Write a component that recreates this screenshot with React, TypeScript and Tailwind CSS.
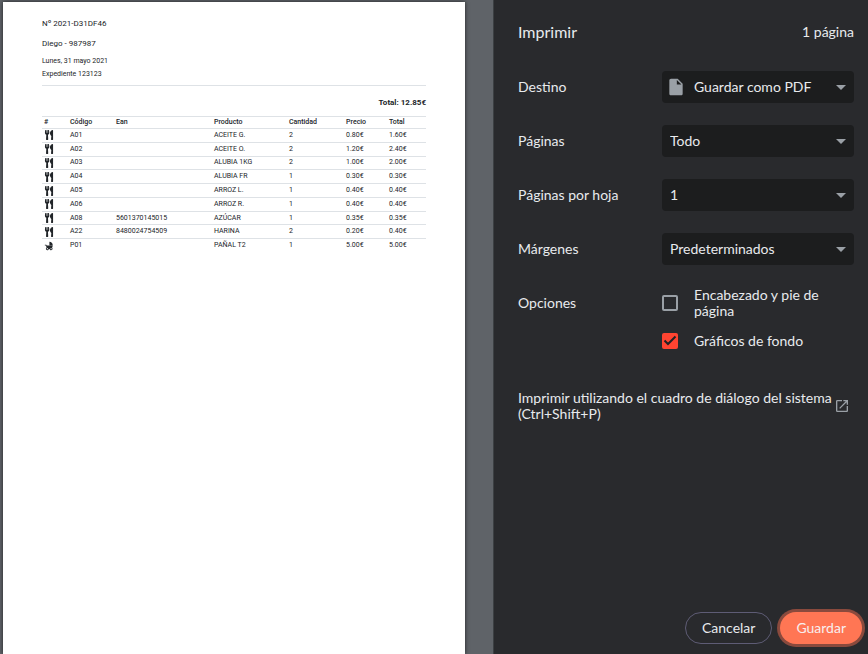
import type { ReactNode } from 'react';
import { FaUtensils } from 'react-icons/fa';
import { MdChildFriendly, MdInsertDriveFile, MdOutlineArrowDropDown, MdOutlineOpenInNew } from 'react-icons/md';

type Line = {
  code: string;
  ean?: string;
  product: string;
  quantity: number;
  price: string;
  total: string;
  baby?: boolean;
};

const lines: Line[] = [
  { code: 'A01', product: 'ACEITE G.', quantity: 2, price: '0.80€', total: '1.60€' },
  { code: 'A02', product: 'ACEITE O.', quantity: 2, price: '1.20€', total: '2.40€' },
  { code: 'A03', product: 'ALUBIA 1KG', quantity: 2, price: '1.00€', total: '2.00€' },
  { code: 'A04', product: 'ALUBIA FR', quantity: 1, price: '0.30€', total: '0.30€' },
  { code: 'A05', product: 'ARROZ L.', quantity: 1, price: '0.40€', total: '0.40€' },
  { code: 'A06', product: 'ARROZ R.', quantity: 1, price: '0.40€', total: '0.40€' },
  { code: 'A08', ean: '5601370145015', product: 'AZÚCAR', quantity: 1, price: '0.35€', total: '0.35€' },
  { code: 'A22', ean: '8480024754509', product: 'HARINA', quantity: 2, price: '0.20€', total: '0.40€' },
  { code: 'P01', product: 'PAÑAL T2', quantity: 1, price: '5.00€', total: '5.00€', baby: true },
];

const headings = ['#', 'Código', 'Ean', 'Producto', 'Cantidad', 'Precio', 'Total'];

function Receipt() {
  return (
    <article className="flex-1 bg-white px-[39px] pt-4 font-['Roboto',sans-serif] text-[7px] leading-[13px] text-[#212529] shadow-[0_0_4px_#202124]">
      <h1 className="text-[8px] leading-3">Nº 2021-D31DF46</h1>
      <h2 className="mt-2 text-[8px] leading-3">Diego - 987987</h2>
      <p className="mt-[5px]">Lunes, 31 mayo 2021</p>
      <p>Expediente 123123</p>
      <hr className="mt-1 border-[#dee2e6]" />
      <p className="mt-[11px] text-right text-[8px] font-bold leading-3">Total: 12.85€</p>
      <table className="mt-[7px] h-[136px] w-full table-fixed border-collapse text-left leading-[11px]">
        <colgroup>
          <col className="w-[26px]" />
          <col className="w-[46px]" />
          <col className="w-[98px]" />
          <col className="w-[75px]" />
          <col className="w-[57px]" />
          <col className="w-[43px]" />
          <col />
        </colgroup>
        <thead>
          <tr className="h-3 border-y border-[#dee2e6]">
            {headings.map((heading) => (
              <th key={heading} scope="col" className="px-0.5 py-0 font-medium">
                {heading}
              </th>
            ))}
          </tr>
        </thead>
        <tbody>
          {lines.map((line) => (
            <tr key={line.code} className="border-t border-[#dee2e6]">
              <td className="px-0.5 py-0">
                {line.baby ? (
                  <MdChildFriendly className="block size-2.5" />
                ) : (
                  <FaUtensils className="block size-2.5" />
                )}
              </td>
              <td className="px-0.5 py-0">{line.code}</td>
              <td className="px-0.5 py-0">{line.ean}</td>
              <td className="px-0.5 py-0">{line.product}</td>
              <td className="px-0.5 py-0">{line.quantity}</td>
              <td className="px-0.5 py-0">{line.price}</td>
              <td className="px-0.5 py-0">{line.total}</td>
            </tr>
          ))}
        </tbody>
      </table>
    </article>
  );
}

function SelectRow({ id, label, value, icon }: { id: string; label: string; value: string; icon?: ReactNode }) {
  return (
    <div className="flex items-center">
      <label htmlFor={id} className="w-36 shrink-0">
        {label}
      </label>
      <div className="relative flex-1">
        {icon}
        <select
          id={id}
          className={`block h-8 w-full appearance-none rounded bg-[#1c1d1e] pr-7 ${icon ? 'pl-8' : 'pl-2'}`}
        >
          <option>{value}</option>
        </select>
        <MdOutlineArrowDropDown className="pointer-events-none absolute right-px top-1 size-6 text-[#9aa0a6]" />
      </div>
    </div>
  );
}

function Option({ label, checked }: { label: string; checked?: boolean }) {
  return (
    <label className="flex items-center gap-4">
      <span className="relative size-4 shrink-0">
        <input
          type="checkbox"
          defaultChecked={checked}
          className="peer block size-4 appearance-none rounded-xs border-2 border-[#9aa0a6] checked:border-[#ff4431] checked:bg-[#ff4431]"
        />
        <svg
          viewBox="0 0 16 16"
          className="pointer-events-none absolute inset-0 hidden size-4 peer-checked:block"
          fill="none"
          stroke="#202124"
          strokeWidth="2"
          aria-hidden="true"
        >
          <path d="M2.5 7.5 6 11 13.5 3.5" />
        </svg>
      </span>
      <span>{label}</span>
    </label>
  );
}

export default function App() {
  return (
    <div className="flex min-h-screen bg-[#5f6368]">
      <main className="flex min-w-0 flex-1 flex-col overflow-hidden pl-[3px] pr-7 pt-0.5">
        <Receipt />
      </main>
      <aside className="flex w-[375px] shrink-0 flex-col border-l border-[#3c4043] bg-[#292a2d] font-['Lato',sans-serif] text-sm leading-4 text-[#e8eaed]">
        <header className="flex items-center justify-between pl-6 pr-3.5 pt-5">
          <h1 className="text-base leading-6">Imprimir</h1>
          <span>1 página</span>
        </header>
        <form className="flex flex-1 flex-col pb-2.5 pt-[27px]">
          <div className="flex flex-col gap-[22px] pl-6 pr-3.5">
            <SelectRow
              id="destination"
              label="Destino"
              value="Guardar como PDF"
              icon={
                <MdInsertDriveFile className="pointer-events-none absolute left-1 top-1.5 size-5 text-[#9aa0a6]" />
              }
            />
            <SelectRow id="pages" label="Páginas" value="Todo" />
            <SelectRow id="per-sheet" label="Páginas por hoja" value="1" />
            <SelectRow id="margins" label="Márgenes" value="Predeterminados" />
            <fieldset className="flex">
              <div className="w-36 shrink-0 pt-2">Opciones</div>
              <div className="flex flex-1 flex-col gap-3.5">
                <Option label="Encabezado y pie de página" />
                <Option label="Gráficos de fondo" checked />
              </div>
            </fieldset>
          </div>
          <a href="#system-dialog" className="mt-[41px] flex items-center pl-6 pr-[18px]">
            <span className="flex-1">Imprimir utilizando el cuadro de diálogo del sistema (Ctrl+Shift+P)</span>
            <MdOutlineOpenInNew className="size-4 shrink-0 text-[#9aa0a6]" />
          </a>
          <div className="mt-auto flex justify-end gap-2 pr-1.5">
            <button type="button" className="h-8 rounded-full border border-[#5e5c75] px-4">
              Cancelar
            </button>
            <button
              type="submit"
              className="h-8 rounded-full bg-[#ff7654] px-4 text-[#f8eeee] ring-3 ring-[#8a4a3d]"
            >
              Guardar
            </button>
          </div>
        </form>
      </aside>
    </div>
  );
}
